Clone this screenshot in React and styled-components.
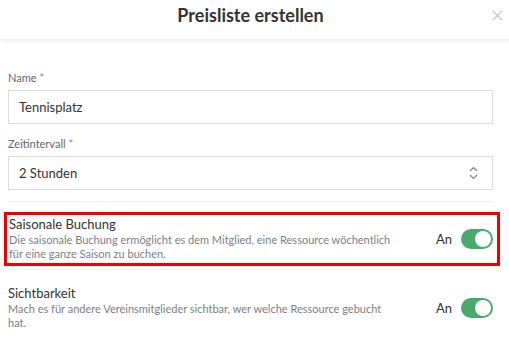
import React from 'react'
import styled, { createGlobalStyle } from 'styled-components'

const GlobalStyle = createGlobalStyle`
  * { box-sizing: border-box; }
  body {
    margin: 0;
    background: #fff;
    font-family: Lato, "Open Sans", sans-serif;
    color: #333;
  }
`

const App = () => {
  return (
    <>
      <GlobalStyle />
      <Modal>
        <Header>
          <Title>Preisliste erstellen</Title>
          <Close aria-label="close">
            <svg width="11" height="11" viewBox="0 0 11 11">
              <path d="M1 1L10 10M10 1L1 10" stroke="#c4c7cc" strokeWidth="1.2" />
            </svg>
          </Close>
        </Header>
        <Content>
          <Field>
            <Label>Name <Star>*</Star></Label>
            <Input>Tennisplatz</Input>
          </Field>
          <Field>
            <Label>Zeitintervall <Star>*</Star></Label>
            <Input>
              2 Stunden
              <svg width="9" height="14" viewBox="0 0 9 14">
                <path d="M1 5L4.5 1.5L8 5M1 9L4.5 12.5L8 9" stroke="#888" strokeWidth="1.2" fill="none" />
              </svg>
            </Input>
          </Field>
          <Divider />
          <SettingRow highlighted>
            <SettingText>
              <SettingTitle>Saisonale Buchung</SettingTitle>
              <SettingDesc>
                Die saisonale Buchung ermöglicht es dem Mitglied, eine Ressource wöchentlich für eine ganze Saison zu buchen.
              </SettingDesc>
            </SettingText>
            <ToggleWrap>
              <ToggleLabel>An</ToggleLabel>
              <Toggle><Knob /></Toggle>
            </ToggleWrap>
          </SettingRow>
          <Divider />
          <SettingRow>
            <SettingText>
              <SettingTitle>Sichtbarkeit</SettingTitle>
              <SettingDesc>
                Mach es für andere Vereinsmitglieder sichtbar, wer welche Ressource gebucht hat.
              </SettingDesc>
            </SettingText>
            <ToggleWrap>
              <ToggleLabel>An</ToggleLabel>
              <Toggle><Knob /></Toggle>
            </ToggleWrap>
          </SettingRow>
        </Content>
      </Modal>
    </>
  )
}

const Modal = styled.div`
  width: 509px;
  height: 339px;
  background: #fff;
  overflow: hidden;
`

const Header = styled.div`
  height: 40px;
  position: relative;
  display: flex;
  align-items: center;
  justify-content: center;
  box-shadow: 0 2px 4px rgba(0, 0, 0, 0.06);
  border-bottom: 1px solid #f2f2f2;
  padding-bottom: 9px;
  padding-right: 8px;
`

const Title = styled.h1`
  margin: 0;
  font-size: 18px;
  font-weight: 700;
  color: #333;
`

const Close = styled.div`
  position: absolute;
  right: 6px;
  top: 10px;
  width: 11px;
  height: 11px;
  display: flex;
`

const Content = styled.div`
  padding: 31px 16px 0 8px;
`

const Field = styled.div`
  display: flex;
  flex-direction: column;
  margin-bottom: 13px;
`

const Label = styled.label`
  font-size: 11px;
  color: #666;
  line-height: 14px;
  margin-bottom: 5px;
`

const Star = styled.span`
  color: #888;
`

const Input = styled.div`
  height: 34px;
  border: 1px solid #dcdde0;
  display: flex;
  align-items: center;
  justify-content: space-between;
  padding: 0 14px 0 10px;
  font-size: 13px;
  color: #333;
`

const Divider = styled.div`
  height: 1px;
  background: #eeeff1;
  margin-top: -2px;
`

const SettingRow = styled.div`
  display: flex;
  align-items: center;
  justify-content: space-between;
  margin: ${(p) => (p.highlighted ? '10px -7px 5px -4px' : '14px 0 0')};
  padding: ${(p) => (p.highlighted ? '0 4px 2px 2px' : '0')};
  border: ${(p) => (p.highlighted ? '3px solid #ee0000' : 'none')};
`

const SettingText = styled.div`
  display: flex;
  flex-direction: column;
`

const SettingTitle = styled.div`
  font-size: 13px;
  line-height: 18px;
  color: #333;
`

const SettingDesc = styled.div`
  font-size: 11px;
  line-height: 14px;
  color: #7b7f86;
  max-width: 384px;
`

const ToggleWrap = styled.div`
  display: flex;
  align-items: center;
  gap: 9px;
  margin-top: 2px;
`

const ToggleLabel = styled.span`
  font-size: 13px;
  color: #333;
`

const Toggle = styled.div`
  width: 32px;
  height: 20px;
  border-radius: 10px;
  background: #4aa96c;
  display: flex;
  align-items: center;
  justify-content: flex-end;
  padding: 2px;
`

const Knob = styled.div`
  width: 16px;
  height: 16px;
  border-radius: 50%;
  background: #fff;
`

export default App
